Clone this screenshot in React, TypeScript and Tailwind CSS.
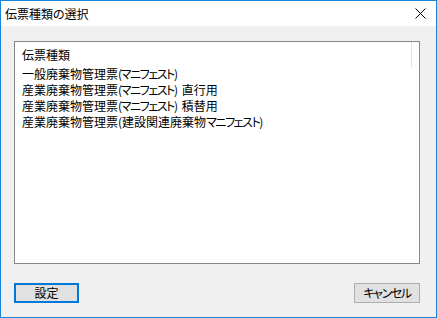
const Kana = ({ children }: { children: string }) => (
  <span className="tracking-[-1.4px]">{children}</span>
)

export default function App() {
  return (
    <div
      className="w-[437px] h-[318px] border border-[#1883d7] bg-[#f0f0f0] flex flex-col text-[12px] text-black [font-feature-settings:'palt'] font-['Noto_Sans_CJK_JP','Noto_Sans',sans-serif]"
    >
      {/* Title bar */}
      <div className="h-[25px] bg-white flex items-center justify-between pl-[4px] pr-[10px] shrink-0">
        <span className="leading-none pt-px">伝票種類の選択</span>
        <svg width="11" height="11" viewBox="0 0 11 11" className="block">
          <path d="M0.5 0.5 L10.5 10.5 M10.5 0.5 L0.5 10.5" stroke="#000" strokeWidth="1" />
        </svg>
      </div>

      {/* Client area */}
      <div className="flex-1 flex flex-col pl-[13px] pr-[16px] pt-[15px]">
        <div className="relative h-[223px] border border-[#828790] bg-white pl-[7px] pt-[5px]">
          <div className="absolute right-[7px] top-0 h-[25px] w-px bg-[#e3e3e3]" />
          <div className="leading-[16px] h-[16px]">伝票種類</div>
          <div className="mt-[3px] whitespace-nowrap">
            <div className="leading-[16px] h-[16px]">
              一般廃棄物管理票<Kana>(マニフェスト)</Kana>
            </div>
            <div className="leading-[16px] h-[16px]">
              産業廃棄物管理票<Kana>(マニフェスト)</Kana>
              <span className="ml-[5px]">直行用</span>
            </div>
            <div className="leading-[16px] h-[16px]">
              産業廃棄物管理票<Kana>(マニフェスト)</Kana>
              <span className="ml-[5px]">積替用</span>
            </div>
            <div className="leading-[16px] h-[16px]">
              産業廃棄物管理票(建設関連廃棄物<Kana>マニフェスト)</Kana>
            </div>
          </div>
        </div>

        {/* Buttons */}
        <div className="flex justify-between mt-[19px]">
          <button className="w-[65px] h-[20px] border-2 border-[#0078d7] bg-[#e1e1e1] flex items-center justify-center leading-none">
            設定
          </button>
          <button className="w-[66px] h-[20px] border border-[#adadad] bg-[#e1e1e1] flex items-center justify-center leading-none">
            <Kana>キャンセル</Kana>
          </button>
        </div>
      </div>
    </div>
  )
}
